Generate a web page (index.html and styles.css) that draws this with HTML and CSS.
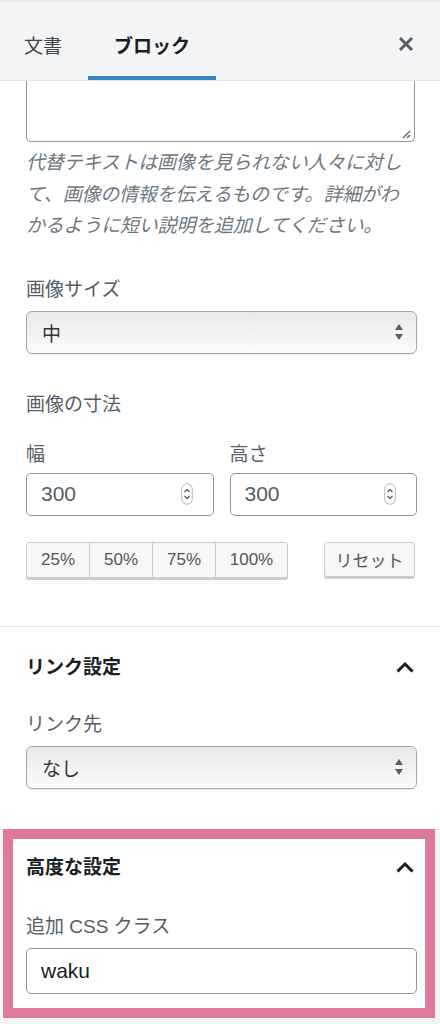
FILE: index.html
```html
<!DOCTYPE html>
<html lang="ja">
<head>
<meta charset="utf-8">
<title>ブロック設定</title>
<link rel="stylesheet" href="styles.css">
</head>
<body>
<div class="sidebar">
  <header class="tabs">
    <div class="tab">文書</div>
    <div class="tab active">ブロック</div>
    <div class="spacer"></div>
    <button class="close" aria-label="閉じる">
      <svg width="16" height="16" viewBox="0 0 16 16"><path d="M2 2 L14 14 M14 2 L2 14" stroke="#555d66" stroke-width="3" stroke-linecap="butt" fill="none"/></svg>
    </button>
  </header>

  <section class="panel first">
    <div class="textarea-stub">
      <svg class="grip" width="10" height="10" viewBox="0 0 10 10"><path d="M9 2 L2 9 M9 6 L6 9" stroke="#555d66" stroke-width="1.2" fill="none"/></svg>
    </div>
    <p class="help">代替テキストは画像を見られない人々に対して、画像の情報を伝えるものです。詳細がわかるように短い説明を追加してください。</p>

    <div class="label l-size">画像サイズ</div>
    <div class="select">
      <span>中</span>
      <svg class="updown" width="10" height="18" viewBox="0 0 10 18"><path d="M5 1 L9 7 L1 7 Z M1 11 L9 11 L5 17 Z" fill="#555d66"/></svg>
    </div>

    <div class="label l-dim">画像の寸法</div>
    <div class="dims">
      <div class="dim">
        <div class="label">幅</div>
        <div class="num">
          <span>300</span>
          <svg class="spin" width="12" height="22" viewBox="0 0 12 22"><rect x="0.75" y="0.75" width="10.5" height="20.5" rx="5.25" fill="#fff" stroke="#b4b9be" stroke-width="1"/><path d="M3.5 9 L6 6.5 L8.5 9 M3.5 13 L6 15.5 L8.5 13" stroke="#555d66" stroke-width="1.3" fill="none"/></svg>
        </div>
      </div>
      <div class="dim">
        <div class="label">高さ</div>
        <div class="num">
          <span>300</span>
          <svg class="spin" width="12" height="22" viewBox="0 0 12 22"><rect x="0.75" y="0.75" width="10.5" height="20.5" rx="5.25" fill="#fff" stroke="#b4b9be" stroke-width="1"/><path d="M3.5 9 L6 6.5 L8.5 9 M3.5 13 L6 15.5 L8.5 13" stroke="#555d66" stroke-width="1.3" fill="none"/></svg>
        </div>
      </div>
    </div>

    <div class="buttons">
      <div class="group">
        <button class="seg s1">25%</button>
        <button class="seg s1">50%</button>
        <button class="seg s1">75%</button>
        <button class="seg s2">100%</button>
      </div>
      <button class="reset">リセット</button>
    </div>
  </section>

  <section class="panel second">
    <div class="heading">
      <span>リンク設定</span>
      <svg width="20" height="14" viewBox="0 0 20 14"><path d="M2.5 11.5 L10 4 L17.5 11.5" stroke="#191e23" stroke-width="3" fill="none"/></svg>
    </div>
    <div class="label l-link">リンク先</div>
    <div class="select">
      <span>なし</span>
      <svg class="updown" width="10" height="18" viewBox="0 0 10 18"><path d="M5 1 L9 7 L1 7 Z M1 11 L9 11 L5 17 Z" fill="#555d66"/></svg>
    </div>
  </section>

  <section class="advanced">
    <div class="highlight">
      <div class="heading">
        <span>高度な設定</span>
        <svg width="20" height="14" viewBox="0 0 20 14"><path d="M2.5 11.5 L10 4 L17.5 11.5" stroke="#191e23" stroke-width="3" fill="none"/></svg>
      </div>
      <div class="label l-css">追加 CSS クラス</div>
      <div class="text-input">waku</div>
    </div>
  </section>
</div>
</body>
</html>
```

FILE: styles.css
```css
html, body {
  margin: 0;
  padding: 0;
  background: #f3f4f5;
}

body {
  font-family: "Liberation Sans", "Noto Sans CJK JP", sans-serif;
  color: #555d66;
  width: 440px;
  height: 1024px;
  overflow: hidden;
}

.sidebar {
  background: #fff;
}

/* header tabs */
.tabs {
  display: flex;
  height: 78px;
  background: #f3f4f5;
  border-top: 2px solid #e6e8ea;
  border-bottom: 1px solid #e2e4e7;
}

.tab {
  display: flex;
  align-items: center;
  padding: 6px 26px 0;
  font-size: 19px;
  color: #40464d;
  box-sizing: border-box;
}

.tab:first-child {
  padding-left: 24px;
}

.tab.active {
  font-weight: bold;
  color: #191e23;
  box-shadow: inset 0 -4px 0 #3582c4;
}

.spacer {
  flex: 1;
}

.close {
  border: 0;
  background: none;
  padding: 6px 0 0;
  margin-right: 26px;
  width: 16px;
  display: flex;
  align-items: center;
  justify-content: center;
  cursor: pointer;
}

/* panels */
.panel {
  padding: 0 23px 0 26px;
  background: #fff;
}

.panel.first {
  padding-bottom: 48px;
}

.panel.second {
  border-top: 1px solid #e2e4e7;
  padding-top: 27px;
  padding-bottom: 40px;
}

.textarea-stub {
  position: relative;
  height: 60px;
  border: 1px solid #8d96a0;
  border-top: 0;
  border-radius: 0 0 5px 5px;
  margin-right: 2px;
}

.grip {
  position: absolute;
  right: 3px;
  bottom: 2px;
}

.help {
  margin: 5px 0 0;
  font-size: 19px;
  line-height: 31.5px;
  font-style: italic;
  color: #6c7781;
  letter-spacing: -0.2px;
}

.label {
  font-size: 19px;
  line-height: 27px;
  color: #555d66;
}

.l-size { margin-top: 34px; }
.l-dim { margin-top: 37px; }
.l-link { margin-top: 30px; }
.l-css { margin-top: 32px; }

.select {
  display: flex;
  align-items: center;
  justify-content: space-between;
  margin-top: 8px;
  height: 41px;
  border: 1px solid #a2a8ad;
  border-radius: 6px;
  background: linear-gradient(#e9e9e9, #fbfbfb);
  box-shadow: 0 1px 1px rgba(0, 0, 0, 0.08);
  padding: 0 12px 0 15px;
  font-size: 19px;
  color: #32373c;
}

.dims {
  display: flex;
  gap: 16px;
  margin-top: 23px;
}

.dim {
  flex: 1;
}

.num {
  display: flex;
  align-items: center;
  justify-content: space-between;
  margin-top: 5px;
  height: 41px;
  border: 1px solid #8d96a0;
  border-radius: 5px;
  background: #fff;
  padding: 0 20px 0 14px;
  font-size: 21px;
  color: #555d66;
}

.buttons {
  display: flex;
  justify-content: space-between;
  margin-top: 26px;
  padding-right: 2px;
}

.group {
  display: flex;
  border: 1px solid #ccc;
  border-radius: 3px;
  box-shadow: 0 2px 0 #ccc;
  overflow: hidden;
  background: #f7f7f7;
}

button.seg, button.reset {
  font-family: "Liberation Sans", "Noto Sans CJK JP", sans-serif;
  font-size: 17px;
  color: #555;
  background: #f7f7f7;
  height: 34px;
  padding: 0;
  margin: 0;
  cursor: pointer;
}

button.seg {
  border: 0;
  border-left: 1px solid #ccc;
}

button.seg:first-child {
  border-left: 0;
}

.s1 { width: 63px; }
.s1:first-child { width: 62px; }
.s2 { width: 72px; }

button.reset {
  width: 91px;
  border: 1px solid #ccc;
  border-radius: 3px;
  box-shadow: 0 2px 0 #ccc;
  height: 35px;
}

.heading {
  display: flex;
  align-items: center;
  justify-content: space-between;
  font-size: 19px;
  line-height: 27px;
  font-weight: bold;
  color: #191e23;
  padding-right: 2px;
}

/* advanced section with highlight */
.advanced {
  border-top: 1px solid #e2e4e7;
  padding: 0 5px 8px 3px;
  background: linear-gradient(#fff 0, #fff 1px, #f3f4f5 1px);
}

.advanced .highlight {
  border: 10px solid #df7a9c;
  background: #fff;
  padding: 15px 8px 14px 13px;
  margin-top: -1px;
}

.text-input {
  margin-top: 8px;
  height: 44px;
  border: 1px solid #8d96a0;
  border-radius: 5px;
  background: #fff;
  display: flex;
  align-items: center;
  padding: 0 14px;
  font-size: 21px;
  color: #191e23;
}
```
